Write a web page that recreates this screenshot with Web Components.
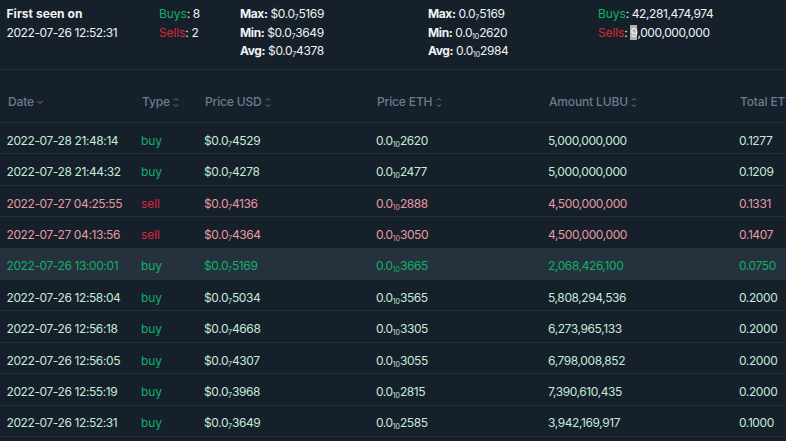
<!DOCTYPE html>
<html><head><meta charset="utf-8">
<style>
html,body{margin:0;padding:0;background:#15202a;overflow:hidden}
body{width:786px;height:441px;font:12px/18.6px Inter,"Noto Sans",sans-serif;letter-spacing:-.4px;color:#f0f3f5}
</style></head><body>
<trade-stats>
  <stat-col><b>First seen on</b><span>2022-07-26 12:52:31</span></stat-col>
  <stat-col><span><buy-sell kind="buy">Buys</buy-sell>: 8</span><span><buy-sell kind="sell">Sells</buy-sell>: 2</span></stat-col>
  <stat-col><span><b>Max:</b> $0.0<tiny-num>7</tiny-num>5169</span><span><b>Min:</b> $0.0<tiny-num>7</tiny-num>3649</span><span><b>Avg:</b> $0.0<tiny-num>7</tiny-num>4378</span></stat-col>
  <stat-col><span><b>Max:</b> 0.0<tiny-num>7</tiny-num>5169</span><span><b>Min:</b> 0.0<tiny-num>10</tiny-num>2620</span><span><b>Avg:</b> 0.0<tiny-num>10</tiny-num>2984</span></stat-col>
  <stat-col><span><buy-sell kind="buy">Buys</buy-sell>: 42,281,474,974</span><span><buy-sell kind="sell">Sells</buy-sell>: <sel-text>9</sel-text>,000,000,000</span></stat-col>
</trade-stats>
<trade-head>
  <sort-head dir="down">Date</sort-head><sort-head>Type</sort-head><sort-head>Price USD</sort-head><sort-head>Price ETH</sort-head><sort-head>Amount LUBU</sort-head><sort-head>Total ETH</sort-head>
</trade-head>
<trade-row kind="buy"><span>2022-07-28 21:48:14</span><buy-sell kind="buy">buy</buy-sell><span>$0.0<tiny-num>7</tiny-num>4529</span><span>0.0<tiny-num>10</tiny-num>2620</span><span>5,000,000,000</span><span>0.1277</span></trade-row>
<trade-row kind="buy"><span>2022-07-28 21:44:32</span><buy-sell kind="buy">buy</buy-sell><span>$0.0<tiny-num>7</tiny-num>4278</span><span>0.0<tiny-num>10</tiny-num>2477</span><span>5,000,000,000</span><span>0.1209</span></trade-row>
<trade-row kind="sell"><span>2022-07-27 04:25:55</span><buy-sell kind="sell">sell</buy-sell><span>$0.0<tiny-num>7</tiny-num>4136</span><span>0.0<tiny-num>10</tiny-num>2888</span><span>4,500,000,000</span><span>0.1331</span></trade-row>
<trade-row kind="sell"><span>2022-07-27 04:13:56</span><buy-sell kind="sell">sell</buy-sell><span>$0.0<tiny-num>7</tiny-num>4364</span><span>0.0<tiny-num>10</tiny-num>3050</span><span>4,500,000,000</span><span>0.1407</span></trade-row>
<trade-row kind="hot"><span>2022-07-26 13:00:01</span><buy-sell kind="buy">buy</buy-sell><span>$0.0<tiny-num>7</tiny-num>5169</span><span>0.0<tiny-num>10</tiny-num>3665</span><span>2,068,426,100</span><span>0.0750</span></trade-row>
<trade-row kind="buy"><span>2022-07-26 12:58:04</span><buy-sell kind="buy">buy</buy-sell><span>$0.0<tiny-num>7</tiny-num>5034</span><span>0.0<tiny-num>10</tiny-num>3565</span><span>5,808,294,536</span><span>0.2000</span></trade-row>
<trade-row kind="buy"><span>2022-07-26 12:56:18</span><buy-sell kind="buy">buy</buy-sell><span>$0.0<tiny-num>7</tiny-num>4668</span><span>0.0<tiny-num>10</tiny-num>3305</span><span>6,273,965,133</span><span>0.2000</span></trade-row>
<trade-row kind="buy"><span>2022-07-26 12:56:05</span><buy-sell kind="buy">buy</buy-sell><span>$0.0<tiny-num>7</tiny-num>4307</span><span>0.0<tiny-num>10</tiny-num>3055</span><span>6,798,008,852</span><span>0.2000</span></trade-row>
<trade-row kind="buy"><span>2022-07-26 12:55:19</span><buy-sell kind="buy">buy</buy-sell><span>$0.0<tiny-num>7</tiny-num>3968</span><span>0.0<tiny-num>10</tiny-num>2815</span><span>7,390,610,435</span><span>0.2000</span></trade-row>
<trade-row kind="buy"><span>2022-07-26 12:52:31</span><buy-sell kind="buy">buy</buy-sell><span>$0.0<tiny-num>7</tiny-num>3649</span><span>0.0<tiny-num>10</tiny-num>2585</span><span>3,942,169,917</span><span>0.1000</span></trade-row>
<script>
function def(name, css, html){
  customElements.define(name, class extends HTMLElement{
    connectedCallback(){
      if(this.shadowRoot) return;
      const r=this.attachShadow({mode:'open'});
      r.innerHTML='<style>'+css+'</style>'+(html?html(this):'<slot></slot>');
    }
  });
}
const TAIL='63px 172px 172px 191px 1fr;';
def('trade-stats',':host{display:grid;grid-template-columns:152.5px 81px 188px 170px 1fr;height:64px;padding:5px 0 0 6.5px;border-bottom:1px solid #25323e}');
def('stat-col',':host{display:flex;flex-direction:column}::slotted(b){font-weight:700;letter-spacing:.05px}');
def('buy-sell',':host{letter-spacing:-.1px}:host([kind=buy]){color:#10b068}:host([kind=sell]){color:#d9293d}');
def('tiny-num',':host{font-size:7px;line-height:0;vertical-align:-2px;letter-spacing:-.1px}');
def('sel-text',':host{display:inline-block;background:#b0b0b0;color:#f0f3f5;line-height:15px}');
def('trade-head',':host{display:grid;grid-template-columns:134px '+TAIL+'height:53px;box-sizing:border-box;padding:23px 0 0 8px;border-bottom:1px solid #25323e;overflow:hidden;white-space:nowrap}');
const up='<path d="M1 3.5 3 1.5 5 3.5M1 7.5 3 9.5 5 7.5"/>', down='<path d="M.5 4 3 6.5 5.5 4"/>';
def('sort-head',':host{display:flex;align-items:center;gap:3.5px;height:18.6px;color:#6d7b90;font-weight:500;letter-spacing:-.15px}svg{width:6px;height:11px;fill:none;stroke:currentColor;stroke-width:1;flex:none}',
  el=>'<slot></slot><svg viewBox="0 0 6 11">'+(el.getAttribute('dir')==='down'?down:up)+'</svg>');
def('trade-row',':host{display:grid;grid-template-columns:134.5px '+TAIL+'height:31.4px;box-sizing:border-box;padding:6px 0 0 6.5px;align-items:center;border-bottom:1px solid #25323e;white-space:nowrap;overflow:hidden}'
  +':host([kind=buy]){color:#c6ead9}:host([kind=sell]){color:#e89aa2}:host([kind=hot]){color:#10b068;background:#25323e}');
</script>
</body></html>
